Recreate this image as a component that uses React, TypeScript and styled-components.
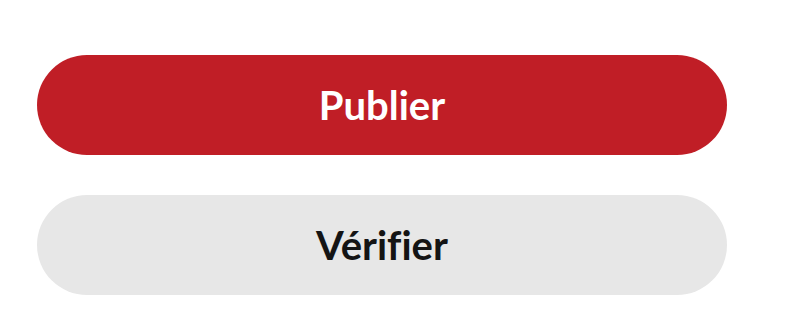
import React from 'react'
import styled, { createGlobalStyle } from 'styled-components'

const Global = createGlobalStyle`
  html, body {
    margin: 0;
    padding: 0;
    background: #fff;
  }
`

const Wrapper = styled.div`
  display: flex;
  flex-direction: column;
  gap: 40px;
  width: 690px;
  padding: 55px 0 0 37px;
`

const Button = styled.button<{ $primary?: boolean }>`
  display: flex;
  align-items: center;
  justify-content: center;
  height: 100px;
  width: 100%;
  border: none;
  border-radius: 50px;
  padding: 0;
  background: ${p => (p.$primary ? '#c01e26' : '#e7e7e7')};
  color: ${p => (p.$primary ? '#ffffff' : '#141414')};
  font-family: Lato, "Open Sans", sans-serif;
  font-size: 40px;
  font-weight: 700;
  font-variant-ligatures: none;
  cursor: pointer;
`

export default function App() {
  return (
    <>
      <Global />
      <Wrapper>
        <Button $primary>Publier</Button>
        <Button>Vérifier</Button>
      </Wrapper>
    </>
  )
}
